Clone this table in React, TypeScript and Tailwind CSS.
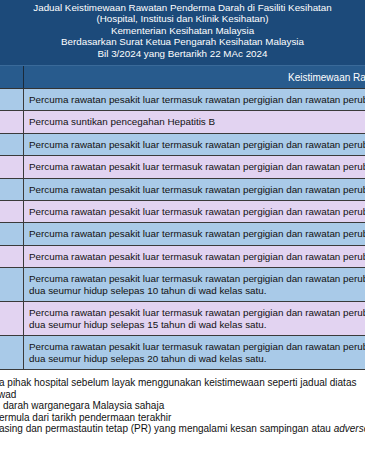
import React from "react";

const single = "Percuma rawatan pesakit luar termasuk rawatan pergigian dan rawatan perubatan";

type Row = { text: string; second?: string; tone: "blue" | "purple" };

const rows: Row[] = [
  { text: single, tone: "blue" },
  { text: "Percuma suntikan pencegahan Hepatitis B", tone: "purple" },
  { text: single, tone: "blue" },
  { text: single, tone: "purple" },
  { text: single, tone: "blue" },
  { text: single, tone: "purple" },
  { text: single, tone: "blue" },
  { text: single, tone: "purple" },
  { text: single, second: "dua seumur hidup selepas 10 tahun di wad kelas satu.", tone: "blue" },
  { text: single, second: "dua seumur hidup selepas 15 tahun di wad kelas satu.", tone: "purple" },
  { text: single, second: "dua seumur hidup selepas 20 tahun di wad kelas satu.", tone: "blue" },
];

export default function App() {
  return (
    <div
      className="w-[365px] h-[456px] overflow-hidden bg-white text-[#111] text-[10px]"
      style={{ fontFamily: '"Liberation Sans", Arial, sans-serif' }}
    >
      <div className="h-[65px] bg-[#1c4a7a] text-white text-center text-[9.8px] leading-[11.5px] pt-[1.5px] whitespace-nowrap">
        <div>Jadual Keistimewaan Rawatan Penderma Darah di Fasiliti Kesihatan</div>
        <div>(Hospital, Institusi dan Klinik Kesihatan)</div>
        <div>Kementerian Kesihatan Malaysia</div>
        <div>Berdasarkan Surat Ketua Pengarah Kesihatan Malaysia</div>
        <div>Bil 3/2024 yang Bertarikh 22 MAc 2024</div>
      </div>
      <div className="flex h-[24px] bg-[#285b8d] border-t border-[#3a6a99] border-b border-b-[#333]">
        <div className="w-[24px] shrink-0 border-r border-[#1a2a3a]" />
        <div className="flex-1 flex items-center pl-[264px] text-white whitespace-nowrap overflow-hidden">
          Keistimewaan Rawatan
        </div>
      </div>
      {rows.map((r, i) => (
        <div
          key={i}
          className={`flex border-b border-[#3a3a3a] ${r.second ? "h-[34px]" : "h-[22.4px]"} ${
            r.tone === "blue" ? "bg-[#a9cae8]" : "bg-[#e2d3f1]"
          }`}
        >
          <div className="w-[24px] shrink-0 border-r border-[#3a3a3a]" />
          <div className="flex-1 flex flex-col justify-center pl-[5px] text-[9.85px] leading-[11.5px] whitespace-nowrap overflow-hidden">
            <div>{r.text}</div>
            {r.second && <div>{r.second}</div>}
          </div>
        </div>
      ))}
      <div className="pt-[7px] leading-[11.5px] whitespace-nowrap overflow-hidden">
        <div className="ml-[-1px]">a pihak hospital sebelum layak menggunakan keistimewaan seperti jadual diatas</div>
        <div className="ml-[-2px]">wad</div>
        <div className="ml-[3px]">darah warganegara Malaysia sahaja</div>
        <div className="ml-[-1px]">ermula dari tarikh pendermaan terakhir</div>
        <div className="ml-[-1px]">
          asing dan permastautin tetap (PR) yang mengalami kesan sampingan atau <i>adverse</i> event
        </div>
      </div>
    </div>
  );
}
